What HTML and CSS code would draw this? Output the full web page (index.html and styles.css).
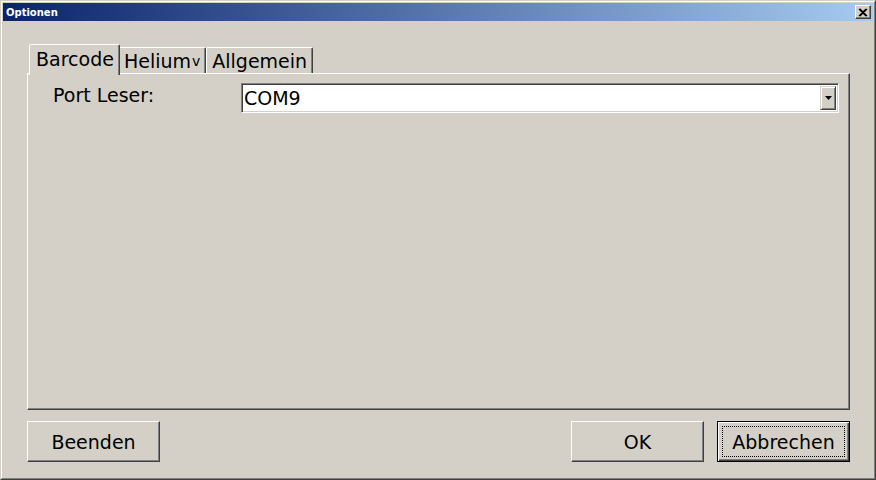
FILE: index.html
```html
<!DOCTYPE html>
<html>
<head>
<meta charset="utf-8">
<link rel="stylesheet" href="styles.css">
</head>
<body>
<div class="window">
  <div class="inner">
    <div class="titlebar">
      <span class="title">Optionen</span>
      <span class="close"><svg width="10" height="9" viewBox="0 0 10 9"><path d="M1 1 L8 8 M2 1 L9 8 M8 1 L1 8 M9 1 L2 8" stroke="#000" stroke-width="1.2" fill="none"/></svg></span>
    </div>
    <div class="content">
      <div class="tabs">
        <div class="tab active">Barcode</div>
        <div class="tab">Helium<span class="small">v</span></div>
        <div class="tab">Allgemein</div>
      </div>
      <div class="panel">
        <div class="row">
          <span class="label">Port Leser:</span>
          <div class="combo">
            <span class="value">COM9</span>
            <span class="drop"><svg width="7" height="4" viewBox="0 0 7 4"><path d="M0 0 H7 L3.5 4 Z" fill="#000"/></svg></span>
          </div>
        </div>
      </div>
      <div class="buttons">
        <div class="btn">Beenden</div>
        <div class="spacer"></div>
        <div class="btn">OK</div>
        <div class="btn default"><span class="focus">Abbrechen</span></div>
      </div>
    </div>
  </div>
</div>
</body>
</html>
```

FILE: styles.css
```css
html, body { margin: 0; padding: 0; }
body { font-family: "DejaVu Sans", Verdana, sans-serif; background: #d4d0c8; }
.window {
  width: 876px; height: 480px; box-sizing: border-box;
  border: 1px solid; border-color: #d4d0c8 #404040 #404040 #d4d0c8;
  background: #d4d0c8;
}
.inner {
  height: 100%; box-sizing: border-box;
  border: 1px solid; border-color: #fff #808080 #808080 #fff;
  padding: 1px; display: flex; flex-direction: column;
}
.titlebar {
  height: 18px; flex: none;
  background: linear-gradient(to right, #0a246a, #a6caf0);
  display: flex; align-items: center; justify-content: space-between;
  padding: 0 2px 0 3px;
}
.title { color: #fff; font-weight: bold; font-size: 10px; letter-spacing: 0; }
.close {
  width: 16px; height: 14px; box-sizing: border-box;
  background: #d4d0c8;
  border: 1px solid; border-color: #fff #404040 #404040 #fff;
  box-shadow: inset -1px -1px 0 #808080;
  display: flex; align-items: center; justify-content: center;
}
.content { flex: 1; display: flex; flex-direction: column; padding: 23px 23px 0 24px; }
.tabs { display: flex; align-items: flex-end; height: 29px; padding-left: 2px; font-size: 19px; }
.tab {
  height: 26px; box-sizing: border-box; padding: 0 5px 0 5px;
  border: 1px solid; border-bottom: none;
  border-color: #fff #404040 transparent #fff;
  box-shadow: inset -1px 0 0 #808080;
  display: flex; align-items: center; color: #000;
  border-radius: 2px 2px 0 0;
}
.tab.active {
  height: 31px; margin-bottom: -2px; position: relative; z-index: 1;
  background: #d4d0c8; padding: 0 5px 3px 6px; margin-right: -2px;
}
.tab .small { font-size: 14px; margin-left: 1px; }
.panel {
  height: 337px; box-sizing: border-box;
  border: 1px solid; border-color: #fff #404040 #404040 #fff;
  box-shadow: inset -1px -1px 0 #808080;
  padding: 9px 10px 0 25px;
}
.row { display: flex; align-items: flex-start; }
.label { font-size: 19px; width: 188px; padding-top: 1px; }
.combo {
  flex: 1; height: 30px; box-sizing: border-box;
  border: 1px solid; border-color: #808080 #fff #fff #808080;
  box-shadow: inset 1px 1px 0 #404040, inset -1px -1px 0 #d4d0c8;
  background: #fff; display: flex; align-items: center; padding: 2px;
}
.value { flex: 1; font-size: 19px; padding-left: 0; }
.drop {
  width: 16px; height: 24px; box-sizing: border-box; background: #d4d0c8;
  border: 1px solid; border-color: #d4d0c8 #404040 #404040 #d4d0c8;
  box-shadow: inset 1px 1px 0 #fff, inset -1px -1px 0 #808080;
  display: flex; align-items: center; justify-content: center;
}
.buttons { display: flex; margin-top: 11px; gap: 13px; }
.spacer { flex: 1; }
.btn {
  width: 133px; height: 41px; box-sizing: border-box; font-size: 19px;
  border: 1px solid; border-color: #fff #404040 #404040 #fff;
  box-shadow: inset -1px -1px 0 #808080;
  display: flex; align-items: center; justify-content: center;
}
.btn.default {
  border: 1px solid #000;
  box-shadow: inset 1px 1px 0 #fff, inset -1px -1px 0 #404040, inset -2px -2px 0 #808080;
  padding: 4px;
}
.focus {
  flex: 1; align-self: stretch; display: flex; align-items: center; justify-content: center;
  border: 1px dotted #000;
}
```
